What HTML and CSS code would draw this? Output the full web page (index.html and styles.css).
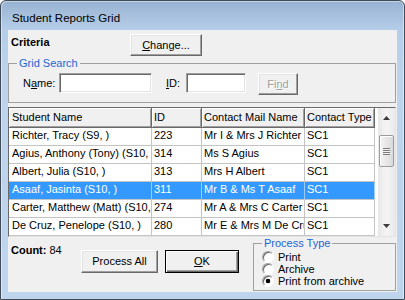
FILE: index.html
```html
<!DOCTYPE html>
<html>
<head>
<meta charset="utf-8">
<title>Student Reports Grid</title>
<link rel="stylesheet" href="styles.css">
</head>
<body>
<div class="window">
  <div class="titlebar">Student Reports Grid</div>
  <div class="client">
    <div class="criteria-row">
      <span class="criteria-label">Criteria</span>
      <button class="btn btn-change"><u>C</u>hange...</button>
    </div>
    <fieldset class="group group-search">
      <legend>Grid Search</legend>
      <div class="search-row">
        <label class="lbl lbl-name">N<u>a</u>me:</label>
        <span class="textbox tb-name"></span>
        <label class="lbl lbl-id"><u>I</u>D:</label>
        <span class="textbox tb-id"></span>
        <button class="btn btn-find" disabled>Fi<u>n</u>d</button>
      </div>
    </fieldset>
    <div class="grid">
      <div class="table">
        <div class="row head">
          <div class="cell">Student Name</div>
          <div class="cell">ID</div>
          <div class="cell">Contact Mail Name</div>
          <div class="cell">Contact Type</div>
        </div>
        <div class="row">
          <div class="cell">Richter, Tracy (S9, )</div>
          <div class="cell">223</div>
          <div class="cell">Mr I &amp; Mrs J Richter</div>
          <div class="cell">SC1</div>
        </div>
        <div class="row">
          <div class="cell">Agius, Anthony (Tony) (S10, )</div>
          <div class="cell">314</div>
          <div class="cell">Ms S Agius</div>
          <div class="cell">SC1</div>
        </div>
        <div class="row">
          <div class="cell">Albert, Julia (S10, )</div>
          <div class="cell">313</div>
          <div class="cell">Mrs H Albert</div>
          <div class="cell">SC1</div>
        </div>
        <div class="row sel">
          <div class="cell">Asaaf, Jasinta (S10, )</div>
          <div class="cell">311</div>
          <div class="cell">Mr B &amp; Ms T Asaaf</div>
          <div class="cell">SC1</div>
        </div>
        <div class="row">
          <div class="cell">Carter, Matthew (Matt) (S10, )</div>
          <div class="cell">274</div>
          <div class="cell">Mr A &amp; Mrs C Carter</div>
          <div class="cell">SC1</div>
        </div>
        <div class="row">
          <div class="cell">De Cruz, Penelope (S10, )</div>
          <div class="cell">280</div>
          <div class="cell">Mr E &amp; Mrs M De Cruz</div>
          <div class="cell">SC1</div>
        </div>
      </div>
      <div class="scrollbar">
        <div class="sb-btn"><svg width="7" height="4" viewBox="0 0 7 4"><polygon points="0,4 3.5,0 7,4" fill="#3c3c3c"/></svg></div>
        <div class="sb-track"><div class="sb-thumb"><span class="sb-grip"></span></div></div>
        <div class="sb-btn"><svg width="7" height="4" viewBox="0 0 7 4"><polygon points="0,0 7,0 3.5,4" fill="#3c3c3c"/></svg></div>
      </div>
    </div>
    <div class="bottom">
      <div class="count"><b>Count:</b> 84</div>
      <button class="btn btn-process">Process All</button>
      <button class="btn btn-ok"><u>O</u>K</button>
      <fieldset class="group group-type">
        <legend>Process Type</legend>
        <div class="radio"><span class="radio-mark"></span>Print</div>
        <div class="radio"><span class="radio-mark"></span>Archive</div>
        <div class="radio"><span class="radio-mark checked"></span>Print from archive</div>
      </fieldset>
    </div>
  </div>
</div>
</body>
</html>
```
FILE: styles.css
```css
* { box-sizing: border-box; }
html, body { margin: 0; padding: 0; background: #fff; }
body {
  font-family: "Liberation Sans", Arial, sans-serif;
  font-size: 11px;
  color: #000;
}
.window {
  width: 405px;
  height: 300px;
  border: 1px solid #414b57;
  border-radius: 6px 6px 0 0;
  background: linear-gradient(to bottom, #97b3d2 0px, #b6cde8 29px, #bdd3ec 70px, #bfd5ed 100%);
  box-shadow: inset 1px 1px 0 rgba(255,255,255,0.45), inset -1px 0 0 rgba(255,255,255,0.45);
  padding: 0 7px 7px;
  display: flex;
  flex-direction: column;
}
.titlebar {
  height: 29px;
  padding: 10px 0 0 4px;
  font-size: 11.5px;
  line-height: 14px;
  color: #000;
}
.client {
  width: 389px;
  height: 262px;
  background: #f0f0f0;
  display: flex;
  flex-direction: column;
}
.criteria-row {
  height: 27px;
  display: flex;
  align-items: flex-start;
}
.criteria-label {
  font-weight: bold;
  line-height: 13px;
  margin: 6px 0 0 3px;
  width: 119px;
}
.btn {
  font: inherit;
  font-size: 11px;
  line-height: 13px;
  color: #000;
  background: #f0f0f0;
  border: 1px solid;
  border-color: #fff #696969 #696969 #fff;
  box-shadow: inset -1px -1px 0 #a0a0a0, inset 1px 1px 0 #e3e3e3;
  padding: 0;
  margin: 0;
  border-radius: 0;
}
.btn-change { width: 72px; height: 22px; margin-top: 4px; }
.group {
  margin: 0;
  border: 1px solid #a0a0a0;
  min-width: 0;
}
.group legend {
  padding: 0 2px;
  color: #1d66d8;
  font-size: 11px;
  line-height: 12px;
}
.group-search {
  width: 388px;
  padding: 4px 8px 7px;
}
.search-row {
  display: flex;
  align-items: flex-start;
  height: 22px;
}
.lbl { line-height: 20px; }
.lbl-name { margin-left: 6px; width: 36px; }
.lbl-id { margin-left: 14px; width: 20px; }
.textbox {
  height: 20px;
  background: #fff;
  border: 1px solid;
  border-color: #a0a0a0 #fff #fff #a0a0a0;
  box-shadow: inset 1px 1px 0 #696969, inset -1px -1px 0 #e3e3e3;
}
.tb-name { width: 93px; }
.tb-id { width: 60px; }
.btn-find {
  margin-left: 12px;
  width: 40px;
  height: 22px;
  color: #a0a0a0;
  text-shadow: 1px 1px 0 #fff;
}
.grid {
  margin-top: 4px;
  width: 388px;
  height: 130px;
  border: 1px solid;
  border-color: #696969 #e3e3e3 #e3e3e3 #696969;
  background: #fff;
  display: flex;
}
.table {
  width: 369px;
  display: flex;
  flex-direction: column;
}
.row {
  display: grid;
  grid-template-columns: 143px 50px 103px 70px;
}
.cell {
  height: 18px;
  line-height: 15px;
  padding-left: 2px;
  border-right: 1px solid #c4c4c4;
  border-bottom: 1px solid #c4c4c4;
  white-space: nowrap;
  overflow: hidden;
}
.cell:first-child { padding-left: 3px; }
.head .cell {
  height: 20px;
  line-height: 19px;
  background: #f0f0f0;
  border-color: #696969;
  box-shadow: inset 1px 1px 0 #fff, inset -1px -1px 0 #a0a0a0;
}
.sel .cell {
  background: #3399ff;
  color: #fff;
  border-right-color: #9ccbff;
}
.scrollbar {
  width: 17px;
  display: flex;
  flex-direction: column;
  background: linear-gradient(to right, #e6e6e6, #f3f3f3 40%, #f3f3f3 60%, #e9e9e9);
}
.sb-btn {
  height: 20px;
  display: flex;
  align-items: center;
  justify-content: center;
}
.sb-track { flex: 1; }
.sb-thumb {
  width: 15px;
  height: 32px;
  margin: 7px 0 0 1px;
  border: 1px solid #9b9b9b;
  border-radius: 2px;
  background: linear-gradient(to right, #f4f4f4, #e4e4e4 60%, #dadada);
  box-shadow: inset 1px 1px 0 #fff;
  display: flex;
  align-items: center;
  justify-content: center;
}
.sb-grip {
  width: 7px;
  height: 7px;
  background: repeating-linear-gradient(to bottom, #7a7a7a 0 1px, #f4f4f4 1px 2px);
}
.bottom {
  display: flex;
  align-items: flex-start;
  height: 55px;
}
.count {
  width: 73px;
  padding-left: 3px;
  margin-top: 7px;
  line-height: 13px;
}
.btn-process { width: 77px; height: 23px; margin-top: 13px; }
.btn-ok {
  width: 74px;
  height: 23px;
  margin-top: 13px;
  margin-left: 7px;
  border: 1px solid #000;
  box-shadow: inset 1px 1px 0 #fff, inset -1px -1px 0 #696969, inset -2px -2px 0 #a0a0a0;
}
.group-type {
  width: 143px;
  margin-left: 14px;
  padding: 2px 8px 3px;
}
.radio {
  display: flex;
  align-items: center;
  height: 12px;
  line-height: 12px;
  white-space: nowrap;
}
.radio-mark {
  width: 12px;
  height: 12px;
  margin-right: 4px;
  border-radius: 50%;
  border: 1px solid;
  border-color: #a0a0a0 #fff #fff #a0a0a0;
  box-shadow: inset 1px 1px 0 #696969;
  background: #fff;
  flex: none;
}
.radio-mark.checked {
  background: radial-gradient(circle, #000 0 2px, #fff 2.6px);
}
```
